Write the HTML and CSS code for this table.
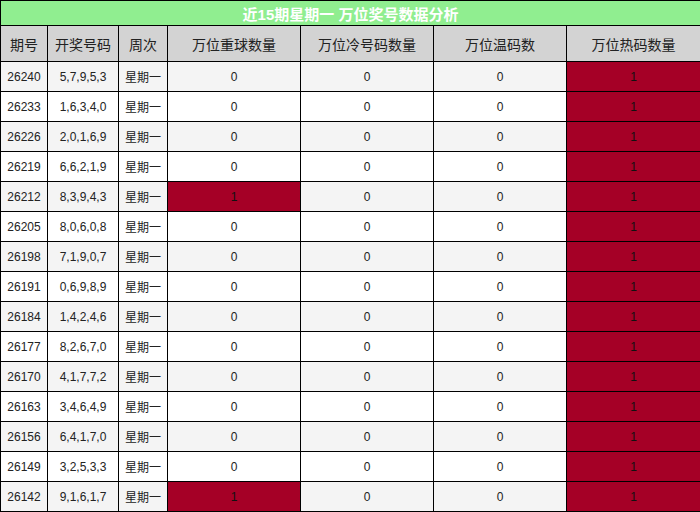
FILE: index.html
```html
<!DOCTYPE html>
<html lang="zh">
<head>
<meta charset="utf-8">
<link rel="stylesheet" href="styles.css">
</head>
<body>
<table class="grid">
  <colgroup>
    <col class="c-issue"><col class="c-nums"><col class="c-week">
    <col class="c-stat"><col class="c-stat"><col class="c-stat"><col class="c-last">
  </colgroup>
  <thead>
    <tr class="title"><th colspan="7">近15期星期一 万位奖号数据分析</th></tr>
    <tr class="head">
      <th>期号</th><th>开奖号码</th><th>周次</th><th>万位重球数量</th><th>万位冷号码数量</th><th>万位温码数</th><th>万位热码数量</th>
    </tr>
  </thead>
  <tbody>
    <tr><td>26240</td><td>5,7,9,5,3</td><td>星期一</td><td>0</td><td>0</td><td>0</td><td class="hot">1</td></tr>
    <tr><td>26233</td><td>1,6,3,4,0</td><td>星期一</td><td>0</td><td>0</td><td>0</td><td class="hot">1</td></tr>
    <tr><td>26226</td><td>2,0,1,6,9</td><td>星期一</td><td>0</td><td>0</td><td>0</td><td class="hot">1</td></tr>
    <tr><td>26219</td><td>6,6,2,1,9</td><td>星期一</td><td>0</td><td>0</td><td>0</td><td class="hot">1</td></tr>
    <tr><td>26212</td><td>8,3,9,4,3</td><td>星期一</td><td class="hot">1</td><td>0</td><td>0</td><td class="hot">1</td></tr>
    <tr><td>26205</td><td>8,0,6,0,8</td><td>星期一</td><td>0</td><td>0</td><td>0</td><td class="hot">1</td></tr>
    <tr><td>26198</td><td>7,1,9,0,7</td><td>星期一</td><td>0</td><td>0</td><td>0</td><td class="hot">1</td></tr>
    <tr><td>26191</td><td>0,6,9,8,9</td><td>星期一</td><td>0</td><td>0</td><td>0</td><td class="hot">1</td></tr>
    <tr><td>26184</td><td>1,4,2,4,6</td><td>星期一</td><td>0</td><td>0</td><td>0</td><td class="hot">1</td></tr>
    <tr><td>26177</td><td>8,2,6,7,0</td><td>星期一</td><td>0</td><td>0</td><td>0</td><td class="hot">1</td></tr>
    <tr><td>26170</td><td>4,1,7,7,2</td><td>星期一</td><td>0</td><td>0</td><td>0</td><td class="hot">1</td></tr>
    <tr><td>26163</td><td>3,4,6,4,9</td><td>星期一</td><td>0</td><td>0</td><td>0</td><td class="hot">1</td></tr>
    <tr><td>26156</td><td>6,4,1,7,0</td><td>星期一</td><td>0</td><td>0</td><td>0</td><td class="hot">1</td></tr>
    <tr><td>26149</td><td>3,2,5,3,3</td><td>星期一</td><td>0</td><td>0</td><td>0</td><td class="hot">1</td></tr>
    <tr><td>26142</td><td>9,1,6,1,7</td><td>星期一</td><td class="hot">1</td><td>0</td><td>0</td><td class="hot">1</td></tr>
  </tbody>
</table>
</body>
</html>
```
FILE: styles.css
```css
html, body {
  margin: 0;
  padding: 0;
  background: #ffffff;
}
.grid {
  border-collapse: collapse;
  table-layout: fixed;
  width: 700px;
  font-family: "Liberation Sans", "Noto Sans CJK SC", sans-serif;
  color: #222;
}
.c-issue { width: 47px; }
.c-nums { width: 71px; }
.c-week { width: 49px; }
.c-stat { width: 133px; }
.c-last { width: 134px; }
.grid th, .grid td {
  border: 1px solid #000;
  padding: 0;
  text-align: center;
  white-space: nowrap;
  overflow: hidden;
}
.title th {
  background: #90ee90;
  color: #fff;
  font-weight: bold;
  font-size: 15px;
  height: 24px;
}
.head th {
  background: #d3d3d3;
  font-weight: normal;
  font-size: 14px;
  height: 35px;
  color: #222;
}
.grid td {
  font-size: 12px;
  height: 29px;
}
tbody tr:nth-child(odd) td { background: #f4f4f4; }
tbody tr:nth-child(even) td { background: #ffffff; }
tbody tr td.hot { background: #a50026; color: #111; }
```
